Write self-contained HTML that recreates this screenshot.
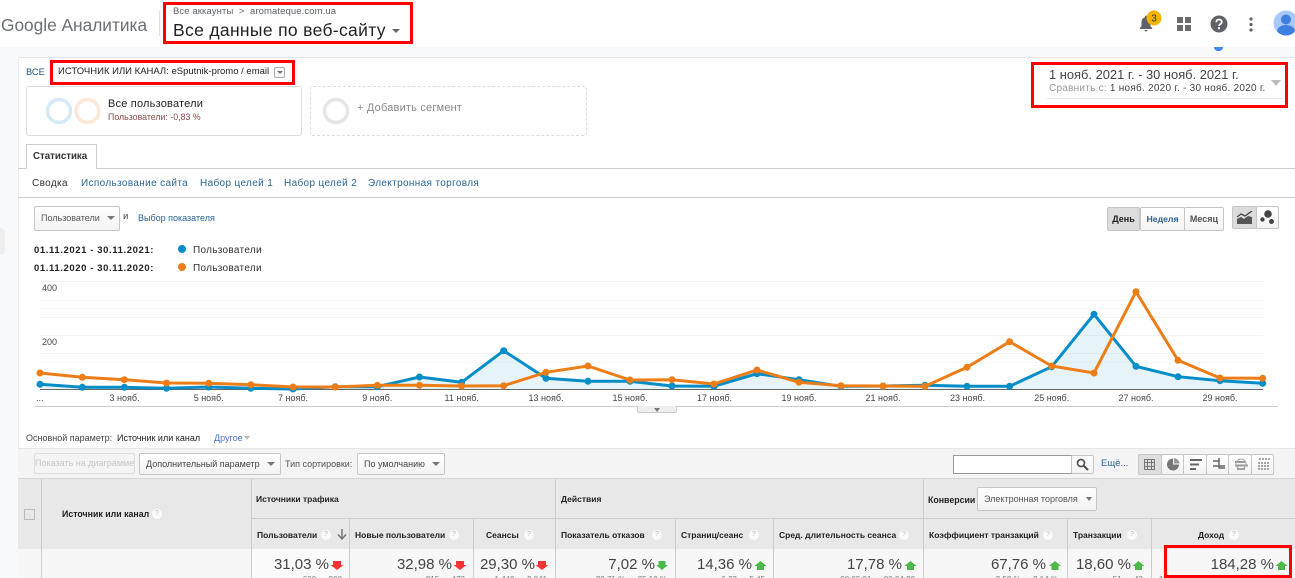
<!DOCTYPE html>
<html lang="ru"><head><meta charset="utf-8"><title>Google Аналитика</title>
<style>
html,body{margin:0;padding:0;background:#fff}
#p{position:relative;width:1295px;height:578px;overflow:hidden;background:#fff;font-family:"Liberation Sans",Arial,sans-serif;color:#333}
#p div,#p span.a{position:absolute;white-space:nowrap;box-sizing:border-box}
.t{font-size:11px;line-height:14px}
.b{font-weight:bold;color:#222}
.l{color:#2a6496}
.rb{border:3px solid #f00;z-index:5}
.btn{background:linear-gradient(#fff,#f3f3f3);border:1px solid #c6c6c6;border-radius:2px}
.tri{width:0;height:0;border-left:4px solid transparent;border-right:4px solid transparent;border-top:4px solid #777}
.v{background:#ccc;width:1px}
.h{font-size:8.500px;font-weight:bold;color:#222;line-height:12px}
.q{width:10px;height:10px;border-radius:50%;background:#fafafa;color:#bbb;font-size:7px;line-height:10px;text-align:center}
.n{font-size:15px;line-height:20px;color:#444;text-align:right}
.s{font-size:8px;line-height:10px;color:#777;text-align:right}
.nav{font-size:10px;letter-spacing:.35px;line-height:14px;top:177px}
</style></head><body><div id="p">

<!-- Top bar -->
<div style="left:1px;top:13px;font-size:17.300px;line-height:24px;color:#6b6f73">Google Аналитика</div>
<div style="left:159px;top:11px;width:1px;height:25px;background:#e0e0e0"></div>
<div class="rb" style="left:163px;top:2px;width:250px;height:42px"></div>
<div style="left:173px;top:6px;font-size:9.500px;line-height:12px;color:#5f6368;letter-spacing:.1px">Все аккаунты &nbsp;&gt;&nbsp; aromateque.com.ua</div>
<div style="left:173px;top:19px;font-size:17.500px;line-height:22px;color:#222;letter-spacing:.33px">Все данные по веб-сайту</div>
<div class="tri" style="left:392px;top:29px;border-top-color:#666"></div>

<svg style="position:absolute;left:1137px;top:14px" width="20" height="20" viewBox="0 0 20 20"><path fill="#5f6368" d="M9 1.500c-.6 0-1 .5-1 1v.7C5.700 3.800 4.500 5.800 4.500 8.200v4L2.800 14v1h12.400v-1l-1.700-1.800v-4c0-2.400-1.200-4.400-3.500-5v-.7c0-.5-.4-1-1-1zM7.500 16c0 .8.700 1.500 1.500 1.500s1.500-.7 1.500-1.500z"/></svg>
<svg style="position:absolute;left:1146px;top:10px" width="16" height="16"><circle cx="8" cy="8" r="7.500" fill="#f4b400"/><text x="8" y="11.500" font-size="10" text-anchor="middle" fill="#333" font-family="Liberation Sans">3</text></svg>
<svg style="position:absolute;left:1176px;top:16px" width="16" height="16"><path fill="#6b6b6b" d="M1 1h6v6H1zM9 1h6v6H9zM1 9h6v6H1zM9 9h6v6H9z"/></svg>
<svg style="position:absolute;left:1210px;top:15px" width="18" height="18" viewBox="0 0 18 18"><circle cx="9" cy="9" r="8.500" fill="#5f6368"/><path d="M6.300 7.200C6.300 5.500 7.500 4.500 9 4.500s2.800 1 2.800 2.500c0 2-2.700 2-2.700 4" fill="none" stroke="#fff" stroke-width="1.800"/><rect x="8" y="12.200" width="2" height="2" fill="#fff"/></svg>
<svg style="position:absolute;left:1248px;top:16px" width="6" height="16"><circle cx="3" cy="3" r="1.600" fill="#5f6368"/><circle cx="3" cy="8.500" r="1.600" fill="#5f6368"/><circle cx="3" cy="14" r="1.600" fill="#5f6368"/></svg>
<svg style="position:absolute;left:1273px;top:10px" width="22" height="26" viewBox="0 0 22 26"><circle cx="13" cy="13" r="12.500" fill="#a8c7fa"/><circle cx="13" cy="9.500" r="5" fill="#3f7fe0"/><path d="M4 21c1-4.500 5-6 9-6s8 1.500 9 6c-2 3-5.500 4.500-9 4.500S6 24 4 21z" fill="#3f7fe0"/></svg>

<!-- Page shell -->
<div style="left:0;top:47px;width:1295px;height:531px;background:#f8f9fa"></div>
<div style="left:18px;top:57px;width:1277px;height:521px;background:#fff;border-top:1px solid #e4e4e4;border-left:1px solid #eceff1"></div>
<div style="left:0;top:228px;width:5px;height:27px;background:#eee;border-radius:0 14px 14px 0"></div>
<div style="left:1214px;top:47px;width:9px;height:4px;background:#4285f4;border-radius:0 0 5px 5px"></div>

<!-- Breadcrumb -->
<div class="t l" style="left:26px;top:65px;font-size:9.300px;color:#1f5a8a">ВСЕ</div>
<div class="rb" style="left:50px;top:60px;width:245px;height:25px"></div>
<div class="t" style="left:58px;top:65px;font-size:9.500px;color:#222">ИСТОЧНИК ИЛИ КАНАЛ: eSputnik-promo / email</div>
<div class="btn" style="left:274px;top:67px;width:11px;height:11px;border-color:#aaa"></div>
<div class="tri" style="left:277px;top:71px;border-left-width:3px;border-right-width:3px;border-top-width:3px"></div>

<!-- Segments -->
<div style="left:26px;top:86px;width:276px;height:50px;border:1px solid #ddd;border-radius:3px"></div>
<svg style="position:absolute;left:44px;top:96px" width="60" height="30"><circle cx="15" cy="15" r="11.500" fill="none" stroke="#d6eaf6" stroke-width="3.500"/><circle cx="43.500" cy="15" r="11.500" fill="none" stroke="#fce8d8" stroke-width="3.500"/></svg>
<div style="left:108px;top:97px;font-size:11px;line-height:14px;color:#222;letter-spacing:.2px">Все пользователи</div>
<div style="left:108px;top:111px;font-size:8.800px;line-height:12px;color:#8a4b4b">Пользователи: -0,83 %</div>
<div style="left:310px;top:86px;width:277px;height:50px;border:1px dashed #ddd;border-radius:3px"></div>
<svg style="position:absolute;left:322px;top:97px" width="28" height="28"><circle cx="14" cy="14" r="11.500" fill="none" stroke="#e6e6e6" stroke-width="3.500"/></svg>
<div style="left:357px;top:101px;font-size:11px;line-height:14px;color:#888;letter-spacing:.2px">+ Добавить сегмент</div>

<!-- Date -->
<div class="rb" style="left:1031px;top:62px;width:257px;height:46px"></div>
<div style="left:1049px;top:67px;font-size:12.900px;line-height:15px;color:#444">1 нояб. 2021 г. - 30 нояб. 2021 г.</div>
<div style="left:1049px;top:83px;font-size:10px;line-height:12px;color:#444;letter-spacing:.25px"><span style="color:#999">Сравнить с:</span> 1 нояб. 2020 г. - 30 нояб. 2020 г.</div>
<div style="left:1047px;top:98px;width:236px;height:1px;background:#e6e6e6"></div>
<div class="tri" style="left:1271px;top:80px;border-left-width:5px;border-right-width:5px;border-top-width:6px;border-top-color:#bbb"></div>

<!-- Tabs -->
<div style="left:18px;top:168px;width:1277px;height:1px;background:#ccc"></div>
<div style="left:26px;top:144px;width:71px;height:25px;background:#fff;border:1px solid #ccc;border-bottom:0;font-size:9.700px;font-weight:bold;line-height:24px;padding-left:6px;color:#333">Статистика</div>
<div class="nav" style="left:32px;color:#333">Сводка</div>
<div class="nav l" style="left:81px">Использование сайта</div>
<div class="nav l" style="left:200px">Набор целей 1</div>
<div class="nav l" style="left:284px">Набор целей 2</div>
<div class="nav l" style="left:368px">Электронная торговля</div>
<div style="left:18px;top:197px;width:1277px;height:1px;background:#ccc"></div>

<!-- Metric selector -->
<div class="btn" style="left:34px;top:206px;width:86px;height:25px"></div>
<div class="t" style="left:41px;top:211px;font-size:9px;color:#555">Пользователи</div>
<div class="tri" style="left:107px;top:216px"></div>
<div class="t" style="left:123px;top:210px;font-size:9.500px;color:#444">и</div>
<div class="t l" style="left:138px;top:211px;font-size:9px">Выбор показателя</div>

<div class="btn" style="left:1107px;top:207px;width:33px;height:24px;background:#dcdcdc;text-align:center;font-size:9px;font-weight:bold;line-height:22px;color:#222">День</div>
<div class="btn" style="left:1140px;top:207px;width:45px;height:24px;text-align:center;font-size:8.700px;font-weight:bold;line-height:22px;color:#2a6496">Неделя</div>
<div class="btn" style="left:1184px;top:207px;width:40px;height:24px;text-align:center;font-size:9px;font-weight:bold;line-height:22px;color:#555">Месяц</div>
<div class="btn" style="left:1232px;top:206px;width:25px;height:23px;background:#dcdcdc"></div>
<div class="btn" style="left:1256px;top:206px;width:23px;height:23px"></div>
<svg style="position:absolute;left:1237px;top:211px" width="16" height="14"><path fill="#555" d="M0 13V8l4-2 3 2 4-3 4 1v7z"/><path fill="none" stroke="#444" stroke-width="1.300" d="M0 6l4-3 4 2 7-5"/></svg>
<svg style="position:absolute;left:1259px;top:208px" width="18" height="19"><circle cx="9" cy="6" r="3.800" fill="#444"/><circle cx="3.500" cy="11.500" r="2.200" fill="#444"/><circle cx="12.500" cy="13.500" r="2.500" fill="#444"/></svg>

<!-- Legend -->
<div class="t b" style="left:34px;top:244px;font-size:9.500px;letter-spacing:.6px">01.11.2021 - 30.11.2021:</div>
<div class="t b" style="left:34px;top:262px;font-size:9.500px;letter-spacing:.6px">01.11.2020 - 30.11.2020:</div>
<div style="left:178px;top:245px;width:8px;height:8px;border-radius:50%;background:#058dc7"></div>
<div style="left:178px;top:263px;width:8px;height:8px;border-radius:50%;background:#ed7e17"></div>
<div class="t" style="left:193px;top:244px;font-size:10px;color:#333;letter-spacing:.3px">Пользователи</div>
<div class="t" style="left:193px;top:262px;font-size:10px;color:#333;letter-spacing:.3px">Пользователи</div>

<!-- Chart -->
<svg style="position:absolute;left:0;top:0" width="1295" height="578">
<g stroke="#f4f4f4" stroke-width="1"><path d="M40 281.500H1263M40 317.500H1263M40 335.500H1263M40 353.500H1263"/><path stroke="#f9f9f9" d="M40 300.500H1263M40 308.500H1263M40 362.500H1263"/></g>
<path fill="#058dc7" fill-opacity=".1" d="M40 389.500V384.300L82.300 387.300 124.300 387.300 166.500 388.300 208.700 387 250.900 388.300 293 389 335.200 386.700 377.300 386.700 419.500 377 461.600 382.300 503.700 350.700 546 378.300 588 381.300 630 381.300 672 386 714 386.300 757 373.700 799 379.700 841 386.300 883 386 925 385.300 967 386.300 1009.600 386.300 1051.700 366.700 1094 314.300 1136 366.300 1178 376.700 1220 380.700 1262.700 383.300V389.500z"/>
<path d="M40 389.500H1263" stroke="#666" stroke-width="1"/>
<path d="M35 406.500H1278" stroke="#ccc" stroke-width="1"/>
<polyline fill="none" stroke="#058dc7" stroke-width="3" points="40,384.300 82.300,387.300 124.300,387.300 166.500,388.300 208.700,387 250.900,388.300 293,389 335.200,386.700 377.300,386.700 419.500,377 461.600,382.300 503.700,350.700 546,378.300 588,381.300 630,381.300 672,386 714,386.300 757,373.700 799,379.700 841,386.300 883,386 925,385.300 967,386.300 1009.600,386.300 1051.700,366.700 1094,314.300 1136,366.300 1178,376.700 1220,380.700 1262.700,383.300"/>
<g fill="#058dc7"><circle cx="40" cy="384.300" r="3.500"/><circle cx="82.300" cy="387.300" r="3.500"/><circle cx="124.300" cy="387.300" r="3.500"/><circle cx="166.500" cy="388.300" r="3.500"/><circle cx="208.700" cy="387" r="3.500"/><circle cx="250.900" cy="388.300" r="3.500"/><circle cx="293" cy="389" r="3.500"/><circle cx="335.200" cy="386.700" r="3.500"/><circle cx="377.300" cy="386.700" r="3.500"/><circle cx="419.500" cy="377" r="3.500"/><circle cx="461.600" cy="382.300" r="3.500"/><circle cx="503.700" cy="350.700" r="3.500"/><circle cx="546" cy="378.300" r="3.500"/><circle cx="588" cy="381.300" r="3.500"/><circle cx="630" cy="381.300" r="3.500"/><circle cx="672" cy="386" r="3.500"/><circle cx="714" cy="386.300" r="3.500"/><circle cx="757" cy="373.700" r="3.500"/><circle cx="799" cy="379.700" r="3.500"/><circle cx="841" cy="386.300" r="3.500"/><circle cx="883" cy="386" r="3.500"/><circle cx="925" cy="385.300" r="3.500"/><circle cx="967" cy="386.300" r="3.500"/><circle cx="1009.600" cy="386.300" r="3.500"/><circle cx="1051.700" cy="366.700" r="3.500"/><circle cx="1094" cy="314.300" r="3.500"/><circle cx="1136" cy="366.300" r="3.500"/><circle cx="1178" cy="376.700" r="3.500"/><circle cx="1220" cy="380.700" r="3.500"/><circle cx="1262.700" cy="383.300" r="3.500"/></g>
<polyline fill="none" stroke="#ed7e17" stroke-width="3" points="40,373 82.300,377.300 124.300,379.700 166.500,383 208.700,383.300 250.900,384.700 293,387 335.200,387 377.300,385.300 419.500,385.300 461.600,386 503.700,385.700 546,372.300 588,366 630,380 672,379.700 714,384 757,370 799,382.300 841,385.700 883,386 925,386.300 967,367.300 1009.600,341.700 1051.700,366 1094,373 1136,291.700 1178,360.300 1220,378 1262.700,378.300"/>
<g fill="#ed7e17"><circle cx="40" cy="373" r="3.500"/><circle cx="82.300" cy="377.300" r="3.500"/><circle cx="124.300" cy="379.700" r="3.500"/><circle cx="166.500" cy="383" r="3.500"/><circle cx="208.700" cy="383.300" r="3.500"/><circle cx="250.900" cy="384.700" r="3.500"/><circle cx="293" cy="387" r="3.500"/><circle cx="335.200" cy="387" r="3.500"/><circle cx="377.300" cy="385.300" r="3.500"/><circle cx="419.500" cy="385.300" r="3.500"/><circle cx="461.600" cy="386" r="3.500"/><circle cx="503.700" cy="385.700" r="3.500"/><circle cx="546" cy="372.300" r="3.500"/><circle cx="588" cy="366" r="3.500"/><circle cx="630" cy="380" r="3.500"/><circle cx="672" cy="379.700" r="3.500"/><circle cx="714" cy="384" r="3.500"/><circle cx="757" cy="370" r="3.500"/><circle cx="799" cy="382.300" r="3.500"/><circle cx="841" cy="385.700" r="3.500"/><circle cx="883" cy="386" r="3.500"/><circle cx="925" cy="386.300" r="3.500"/><circle cx="967" cy="367.300" r="3.500"/><circle cx="1009.600" cy="341.700" r="3.500"/><circle cx="1051.700" cy="366" r="3.500"/><circle cx="1094" cy="373" r="3.500"/><circle cx="1136" cy="291.700" r="3.500"/><circle cx="1178" cy="360.300" r="3.500"/><circle cx="1220" cy="378" r="3.500"/><circle cx="1262.700" cy="378.300" r="3.500"/></g>
<g font-family="Liberation Sans" font-size="9" fill="#444">
<text x="42" y="291">400</text><text x="42" y="345">200</text>
<text x="36" y="401">...</text>
<text x="124.500" y="401" text-anchor="middle">3 нояб.</text>
<text x="208.700" y="401" text-anchor="middle">5 нояб.</text>
<text x="293" y="401" text-anchor="middle">7 нояб.</text>
<text x="377.300" y="401" text-anchor="middle">9 нояб.</text>
<text x="461.700" y="401" text-anchor="middle">11 нояб.</text>
<text x="546" y="401" text-anchor="middle">13 нояб.</text>
<text x="630" y="401" text-anchor="middle">15 нояб.</text>
<text x="714.500" y="401" text-anchor="middle">17 нояб.</text>
<text x="799" y="401" text-anchor="middle">19 нояб.</text>
<text x="883" y="401" text-anchor="middle">21 нояб.</text>
<text x="967.500" y="401" text-anchor="middle">23 нояб.</text>
<text x="1051.700" y="401" text-anchor="middle">25 нояб.</text>
<text x="1136" y="401" text-anchor="middle">27 нояб.</text>
<text x="1220" y="401" text-anchor="middle">29 нояб.</text>
</g>
</svg>
<div style="left:637px;top:406px;width:40px;height:7px;background:#eee;border:1px solid #ccc;border-top:0;border-radius:0 0 2px 2px"></div>
<div class="tri" style="left:654px;top:408px;border-left-width:3px;border-right-width:3px"></div>

<!-- Primary dimension -->
<div class="t" style="left:26px;top:431px;font-size:9px;color:#444">Основной параметр:</div>
<div class="t" style="left:117px;top:431px;font-size:9px;color:#222">Источник или канал</div>
<div class="t" style="left:214px;top:431px;font-size:9px;color:#4a6fd0">Другое</div>
<div class="tri" style="left:244px;top:436px;border-top-color:#bbb;border-left-width:3.500px;border-right-width:3.500px"></div>

<!-- Toolbar -->
<div style="left:18px;top:448px;width:1277px;height:31px;background:#f4f4f4;border-top:1px solid #e6e6e6;border-bottom:1px solid #d6d6d6"></div>
<div style="left:34px;top:453px;width:101px;height:21px;border:1px solid #ddd;border-radius:2px;background:#f4f4f4;font-size:9px;line-height:19px;color:#c6c6c6;text-align:center">Показать на диаграмме</div>
<div class="btn" style="left:139px;top:453px;width:142px;height:22px"></div>
<div class="t" style="left:146px;top:457px;font-size:9px;color:#444">Дополнительный параметр</div>
<div class="tri" style="left:267px;top:462px"></div>
<div class="t" style="left:285px;top:457px;font-size:9px;color:#555">Тип сортировки:</div>
<div class="btn" style="left:357px;top:453px;width:88px;height:22px"></div>
<div class="t" style="left:364px;top:457px;font-size:9px;color:#444">По умолчанию</div>
<div class="tri" style="left:432px;top:462px"></div>
<div style="left:953px;top:455px;width:119px;height:19px;background:#fff;border:1px solid #999"></div>
<div class="btn" style="left:1071px;top:455px;width:23px;height:19px"></div>
<svg style="position:absolute;left:1076px;top:458px" width="13" height="13"><circle cx="5" cy="5" r="3.500" fill="none" stroke="#555" stroke-width="1.700"/><path d="M8 8l4 4" stroke="#555" stroke-width="2.200"/></svg>
<div class="t l" style="left:1101px;top:457px;font-size:9.500px">Ещё...</div>
<div class="btn" style="left:1138px;top:454px;width:24px;height:21px;background:#dedede"></div>
<div class="btn" style="left:1161px;top:454px;width:23px;height:21px"></div>
<div class="btn" style="left:1183px;top:454px;width:24px;height:21px"></div>
<div class="btn" style="left:1206px;top:454px;width:23px;height:21px"></div>
<div class="btn" style="left:1228px;top:454px;width:24px;height:21px"></div>
<div class="btn" style="left:1251px;top:454px;width:23px;height:21px"></div>
<svg style="position:absolute;left:1138px;top:454px" width="136" height="21">
<path fill="none" stroke="#777" d="M6.500 5.500h10v10h-10zM9.500 5.500v10M13.500 5.500v10M6.500 8.500h10M6.500 12.500h10"/>
<path fill="#777" d="M35 4.500a6 6 0 1 0 6 6h-6z"/><path fill="#999" d="M36 4a6 6 0 0 1 5.500 5.500H36z"/>
<path fill="#666" d="M52 5h12v2H52zM52 9.500h9v2h-9zM52 14h6v2h-6z"/>
<path fill="none" stroke="#666" stroke-width="1.500" d="M75 7h6v7h6M75 12h12M81 4v3"/>
<path fill="#999" d="M97 7h11v2H97zM97 10.500h13v2H97zM99 14h8v2h-8z"/><circle cx="103" cy="10" r="5" fill="none" stroke="#aaa"/>
<path fill="none" stroke="#777" stroke-width="1.300" stroke-dasharray="2 1" d="M121 5h11M121 8v8M124 8v8M127 8v8M130 8v8"/>
</svg>

<!-- Table head -->
<div style="left:18px;top:479px;width:1277px;height:70px;background:#e8e8e8"></div>
<div style="left:251px;top:518px;width:1044px;height:1px;background:#ccc"></div>
<div style="left:18px;top:549px;width:1277px;height:29px;background:#f7f7f7"></div>
<div style="left:252px;top:549px;width:97px;height:29px;background:#fafafa"></div>
<div class="v" style="left:41px;top:479px;height:99px"></div>
<div class="v" style="left:251px;top:479px;height:99px"></div>
<div class="v" style="left:349px;top:518px;height:60px"></div>
<div class="v" style="left:473px;top:518px;height:60px"></div>
<div class="v" style="left:555px;top:479px;height:99px"></div>
<div class="v" style="left:675px;top:518px;height:60px"></div>
<div class="v" style="left:773px;top:518px;height:60px"></div>
<div class="v" style="left:923px;top:479px;height:99px"></div>
<div class="v" style="left:1067px;top:518px;height:60px"></div>
<div class="v" style="left:1151px;top:518px;height:60px"></div>

<div style="left:24px;top:509px;width:11px;height:11px;border:1px solid #bbb;background:#e8e8e8"></div>
<div class="h" style="left:62px;top:508px;font-size:8.800px">Источник или канал</div>
<div class="q" style="left:152px;top:509px">?</div>
<div class="h" style="left:256px;top:493px">Источники трафика</div>
<div class="h" style="left:561px;top:493px">Действия</div>
<div class="h" style="left:928px;top:494px;font-size:8.800px">Конверсии</div>
<div class="btn" style="left:977px;top:487px;width:120px;height:24px"></div>
<div class="t" style="left:984px;top:492px;font-size:9px;color:#555">Электронная торговля</div>
<div class="tri" style="left:1086px;top:497px;border-left-width:3.500px;border-right-width:3.500px"></div>

<div class="h" style="left:257px;top:529px">Пользователи</div><div class="q" style="left:321px;top:530px">?</div>
<svg style="position:absolute;left:337px;top:529px" width="10" height="11"><path d="M5 0v9M1 5.500L5 10l4-4.500" fill="none" stroke="#777" stroke-width="1.500"/></svg>
<div class="h" style="left:355px;top:529px">Новые пользователи</div><div class="q" style="left:449px;top:530px">?</div>
<div class="h" style="left:486px;top:529px">Сеансы</div><div class="q" style="left:524px;top:530px">?</div>
<div class="h" style="left:561px;top:529px">Показатель отказов</div><div class="q" style="left:652px;top:530px">?</div>
<div class="h" style="left:681px;top:529px">Страниц/сеанс</div><div class="q" style="left:749px;top:530px">?</div>
<div class="h" style="left:779px;top:529px">Сред. длительность сеанса</div><div class="q" style="left:899px;top:530px">?</div>
<div class="h" style="left:929px;top:529px">Коэффициент транзакций</div><div class="q" style="left:1043px;top:530px">?</div>
<div class="h" style="left:1073px;top:529px">Транзакции</div><div class="q" style="left:1127px;top:530px">?</div>
<div class="h" style="left:1198px;top:529px">Доход</div><div class="q" style="left:1229px;top:530px">?</div>

<!-- Totals -->
<div class="n" style="right:966px;top:555px">31,03 %</div>
<div class="n" style="right:843px;top:555px">32,98 %</div>
<div class="n" style="right:760px;top:555px">29,30 %</div>
<div class="n" style="right:640px;top:555px">7,02 %</div>
<div class="n" style="right:543px;top:555px">14,36 %</div>
<div class="n" style="right:393px;top:555px">17,78 %</div>
<div class="n" style="right:249px;top:555px">67,76 %</div>
<div class="n" style="right:164px;top:555px">18,60 %</div>
<div class="n" style="right:21px;top:555px">184,28 %</div>

<svg style="position:absolute;left:0;top:545px" width="1295" height="33">
<g fill="#f33"><path d="M333 16h8v4h2.500l-6.500 5-6.500-5H333z"/><path d="M456 16h8v4h2.500l-6.500 5-6.500-5H456z"/><path d="M538 16h8v4h2.500l-6.500 5-6.500-5H538z"/></g>
<g fill="#4cb848" transform="translate(0,4)"><path d="M658.500 12h7v4h2.500l-6 5-6-5h2.500z"/>
<path d="M757 21h7v-4h2.500l-6-5-6 5H757z"/><path d="M907 21h7v-4h2.500l-6-5-6 5H907z"/><path d="M1051.500 21h7v-4h2.500l-6-5-6 5h2.500z"/><path d="M1135 21h7v-4h2.500l-6-5-6 5h2.500z"/><path d="M1278 21h7v-4h2.500l-6-5-6 5h2.500z"/></g>
</svg>

<div class="s" style="right:953px;top:575px">600 ↔ 900</div>
<div class="s" style="right:830px;top:575px">815 ↔ 470</div>
<div class="s" style="right:748px;top:575px">1 440 ↔ 2 041</div>
<div class="s" style="right:628px;top:575px">28,71 % ↔ 25,10 %</div>
<div class="s" style="right:530px;top:575px">6,23 ↔ 5,45</div>
<div class="s" style="right:380px;top:575px">00:05:01 ↔ 00:04:20</div>
<div class="s" style="right:237px;top:575px">3,58 % ↔ 2,14 %</div>
<div class="s" style="right:152px;top:575px">51 ↔ 43</div>
<div class="s" style="left:1159px;top:575px">1</div>

<!-- Revenue highlight -->
<div class="rb" style="left:1164px;top:545px;width:128px;height:33px"></div>
</div></body></html>
